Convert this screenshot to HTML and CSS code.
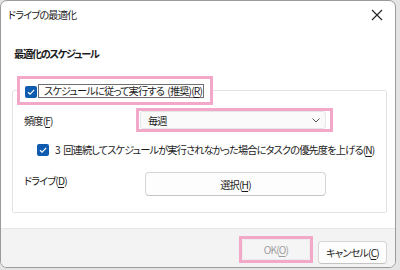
FILE: index.html
```html
<!DOCTYPE html>
<html lang="ja">

<head>
  <meta charset="UTF-8">
  <meta name="viewport" content="width=device-width, initial-scale=1.0">
  <title>ドライブの最適化</title>
  <link rel="stylesheet" href="styles.css">
</head>

<body>
  <div class="window">
    <div class="titlebar">
      <span class="title">ドライブの最適化</span>
      <span class="close">
        <svg width="12" height="12" viewBox="0 0 12 12"><path d="M1 1L11 11M11 1L1 11" stroke="#222" stroke-width="1.1" fill="none"/></svg>
      </span>
    </div>
    <div class="content">
      <div class="heading">最適化のスケジュール</div>
      <fieldset class="group">
        <legend class="mark legend">
          <span class="check">
            <svg width="12" height="12" viewBox="0 0 12 12"><path d="M3 6.2L5.1 8.2L9.2 3.9" stroke="#fff" stroke-width="1.2" fill="none"/></svg>
          </span>
          <span class="focus">スケジュールに従って実行する (推奨)(<u>R</u>)</span>
        </legend>
        <div class="row freq">
          <span class="label">頻度(<u>F</u>)</span>
          <div class="mark select-mark">
            <div class="select">
              <span>毎週</span>
              <svg width="8" height="5" viewBox="0 0 8 5"><path d="M0.5 0.5L4 4L7.5 0.5" stroke="#555" stroke-width="1" fill="none"/></svg>
            </div>
          </div>
        </div>
        <div class="row boost">
          <span class="check">
            <svg width="12" height="12" viewBox="0 0 12 12"><path d="M3 6.2L5.1 8.2L9.2 3.9" stroke="#fff" stroke-width="1.2" fill="none"/></svg>
          </span>
          <span class="boost-text">3 回連続してスケジュールが実行されなかった場合にタスクの優先度を上げる(<u>N</u>)</span>
        </div>
        <div class="row drive">
          <span class="label">ドライブ(<u>D</u>)</span>
          <button class="btn wide">選択(<u>H</u>)</button>
        </div>
      </fieldset>
    </div>
    <div class="footer">
      <div class="mark ok-mark">
        <button class="btn disabled">OK(<u>O</u>)</button>
      </div>
      <button class="btn cancel">キャンセル(<u>C</u>)</button>
    </div>
  </div>
</body>

</html>
```

FILE: styles.css
```css
body,
html {
  width: 100%;
  height: 100%;
  padding: 0;
  margin: 0;
}

body {
  background: #e4e4e4;
  font-family: "Noto Sans CJK JP", "Noto Sans", sans-serif;
  font-size: 10.2px;
  letter-spacing: -0.85px;
  word-spacing: 2px;
  font-feature-settings: "palt";
  color: #1b1b1b;
}

u {
  text-underline-offset: 2px;
}

.window {
  width: 396px;
  height: 268px;
  box-sizing: border-box;
  border: 1px solid #9a9a9a;
  border-radius: 7px;
  background: #fff;
  display: flex;
  flex-direction: column;
  overflow: hidden;
}

.titlebar {
  height: 27px;
  display: flex;
  align-items: center;
  justify-content: space-between;
  padding: 0 7px 2px 7px;
}

.close {
  display: flex;
  margin-right: 5px;
}

.content {
  flex: 1;
  padding: 16px 8px 0 11px;
}

.heading {
  font-weight: bold;
  letter-spacing: -1.3px;
  line-height: 16px;
  padding-left: 2px;
}

.group {
  margin: 14px 0 0 0;
  padding: 0 4px 16px 4px;
  border: 1px solid #e3e3e3;
  border-radius: 2px;
}

.mark {
  border: 3px solid #f2a9c9;
}

.legend {
  display: flex;
  align-items: center;
  height: 29px;
  box-sizing: border-box;
  padding: 0 6px 0 5px;
}

.check {
  width: 12px;
  height: 12px;
  border-radius: 2px;
  background: #0f5bb0;
  display: flex;
  flex: none;
}

.legend .check {
  margin-top: 3px;
}

.focus {
  margin-left: 1px;
  border: 1px solid #6f6f6f;
  padding: 0 1px 0 5px;
  line-height: 12px;
}

.row {
  display: flex;
  align-items: center;
  padding-left: 7px;
}

.label {
  width: 112px;
  flex: none;
}

.freq {
  margin-top: 3px;
}

.select-mark {
  width: 197px;
  height: 24px;
  box-sizing: border-box;
  padding: 0 4px 0 1px;
}

.select {
  height: 18px;
  box-sizing: border-box;
  border: 1px solid #e6e6e6;
  border-radius: 3px;
  background: #fafafa;
  display: flex;
  align-items: center;
  justify-content: space-between;
  padding: 0 5px 0 7px;
}

.boost {
  margin-top: 10px;
  padding-left: 20px;
}

.boost-text {
  margin-left: 6px;
  white-space: nowrap;
}

.drive {
  margin-top: 15px;
  align-items: flex-start;
}

.drive .label {
  width: 121px;
  margin-top: 1px;
}

.btn {
  font-family: inherit;
  font-size: inherit;
  letter-spacing: inherit;
  font-feature-settings: "palt";
  color: #1b1b1b;
  background: #fdfdfd;
  border: 1px solid #d6d6d6;
  border-bottom-color: #c4c4c4;
  border-radius: 4px;
  padding: 0;
}

.wide {
  width: 181px;
  height: 24px;
}

.footer {
  height: 39px;
  box-sizing: border-box;
  border-top: 1px solid #e6e6e6;
  background: #f3f3f3;
  display: flex;
  justify-content: flex-end;
  align-items: flex-start;
  padding: 7px 8px 0 0;
}

.ok-mark {
  width: 74px;
  height: 27px;
  box-sizing: border-box;
}

.disabled {
  width: 100%;
  height: 100%;
  color: #9d9d9d;
  background: #f5f5f5;
  border-color: #ececec;
}

.cancel {
  width: 69px;
  height: 23px;
  margin: 5px 0 0 5px;
}
```
